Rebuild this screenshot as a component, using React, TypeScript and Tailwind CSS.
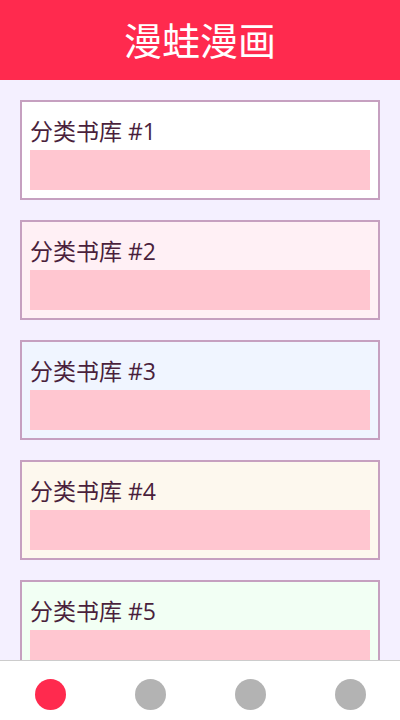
const cards = [
  { id: 1, bg: 'bg-white' },
  { id: 2, bg: 'bg-[#fff0f5]' },
  { id: 3, bg: 'bg-[#f0f5ff]' },
  { id: 4, bg: 'bg-[#fdf8ee]' },
  { id: 5, bg: 'bg-[#f2fff4]' },
]

export default function App() {
  return (
    <div
      className="h-[720px] w-[400px] flex flex-col bg-[#f4f0ff] overflow-hidden"
      style={{ fontFamily: '"Open Sans", "Noto Sans CJK SC", sans-serif' }}
    >
      <header className="h-[80px] shrink-0 flex items-center justify-center bg-[#ff2a4e]">
        <h1 className="text-[38px] text-white leading-none">漫蛙漫画</h1>
      </header>

      <main className="flex-1 overflow-hidden px-5 pt-5 flex flex-col gap-5">
        {cards.map((c) => (
          <div
            key={c.id}
            className={`h-[100px] shrink-0 border-2 border-[#c6a0c0] px-2 pt-[10px] ${c.bg}`}
          >
            <div className="h-[38px] flex items-center text-[23px] text-[#4a1f3c]">
              分类书库 #{c.id}
            </div>
            <div className="h-[40px] bg-[#ffc6d0]" />
          </div>
        ))}
      </main>

      <nav className="h-[60px] shrink-0 bg-white border-t border-[#cccccc] grid grid-cols-4">
        {[0, 1, 2, 3].map((i) => (
          <div key={i} className="flex items-center justify-center pt-2">
            <span
              className={`w-[31px] h-[31px] rounded-full ${i === 0 ? 'bg-[#ff2a4e]' : 'bg-[#b3b3b3]'}`}
            />
          </div>
        ))}
      </nav>
    </div>
  )
}
